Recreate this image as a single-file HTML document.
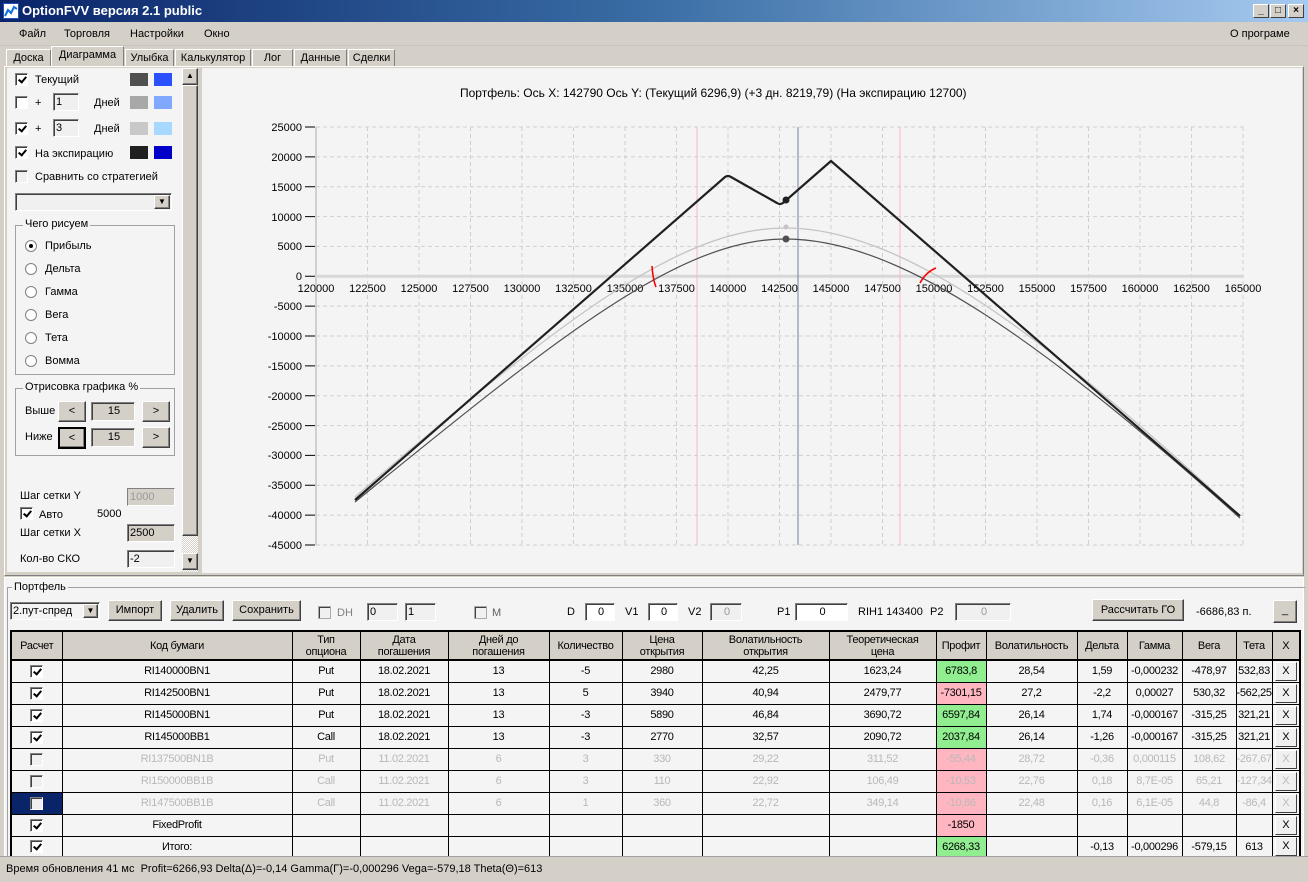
<!DOCTYPE html>
<html><head><meta charset="utf-8">
<style>
*{box-sizing:border-box;margin:0;padding:0}
body{width:1308px;height:882px;overflow:hidden;background:#d4d0c8;font-family:"Liberation Sans",sans-serif;font-size:11px;color:#000;position:relative}
.a{position:absolute}
.title{left:0;top:0;width:1308px;height:22px;background:linear-gradient(90deg,#0a246a,#3a6ea5 50%,#a6caf0);color:#fff;font-weight:bold;font-size:13px;line-height:22px;padding-left:22px}
.wb{width:16px;height:14px;background:#d4d0c8;border:1px solid;border-color:#fff #404040 #404040 #fff;top:4px;font-size:10px;line-height:11px;text-align:center;color:#000;font-weight:bold}
.menu{top:22px;height:24px;line-height:24px;font-size:11px}
.tab{top:49px;height:18px;border:1px solid;border-color:#fff #808080 transparent #fff;line-height:16px;text-align:center;background:#d4d0c8;font-size:11px}
.cb{width:13px;height:13px;border:1px solid;border-color:#808080 #fff #fff #808080;background:#fff;box-shadow:inset 1px 1px 0 #404040}
span.cb{display:inline-block;position:relative;vertical-align:middle}
.c::after{content:"";position:absolute;left:4px;top:1px;width:3px;height:6px;border:solid #000;border-width:0 2px 2px 0;transform:rotate(40deg)}
.tb{border:1px solid;border-color:#808080 #fff #fff #808080;background:#f0f0f0;box-shadow:inset 1px 1px 0 #404040;padding-left:2px;line-height:16px}
.btn{background:#d4d0c8;border:1px solid;border-color:#fff #404040 #404040 #fff;box-shadow:inset -1px -1px 0 #808080;text-align:center}
.rad{width:12px;height:12px;border-radius:50%;background:#fff;border:1px solid #808080}
.grp{border:1px solid #a0a0a0}
.gl{background:#f4f4f4;padding:0 2px}
table{border-collapse:collapse;table-layout:fixed}
td{border:1px solid #000;text-align:center;height:22px;font-size:11px;letter-spacing:-0.3px;white-space:nowrap;overflow:hidden;background:#f4f4f4}
th{border:1px solid #000;border-bottom:2px solid #000;background:#d4d0c8;font-weight:normal;font-size:11px;line-height:12px;height:29px;letter-spacing:-0.3px}
tr.g td{color:#b8b8b8}
.gr{background:#90ee90!important}
.pk{background:#ffb6c1!important}
.x{background:#f0f0f0;border:1px solid;border-color:#fff #404040 #404040 #fff;display:inline-block;width:22px;height:19px;line-height:17px}
</style></head><body>
<div class="a title">OptionFVV версия 2.1 public</div>
<div class="a" style="left:3px;top:3px;width:16px;height:16px;background:#fff;border:1px solid #2050c0"><svg width="14" height="14"><polyline points="1,12 4,6 7,9 10,3 13,5" fill="none" stroke="#1070e0" stroke-width="2"/></svg></div>
<div class="a wb" style="left:1253px">_</div><div class="a wb" style="left:1270px">□</div><div class="a wb" style="left:1288px">×</div>
<div class="a menu" style="left:19px">Файл</div><div class="a menu" style="left:64px">Торговля</div><div class="a menu" style="left:130px">Настройки</div><div class="a menu" style="left:204px">Окно</div><div class="a menu" style="left:1230px">О програме</div>
<div class="a" style="left:0;top:45px;width:1308px;height:1px;background:#c8c4bc"></div>
<div class="a tab" style="left:6px;width:45px">Доска</div>
<div class="a tab" style="left:51px;top:46px;width:73px;height:21px">Диаграмма</div>
<div class="a tab" style="left:125px;width:49px">Улыбка</div>
<div class="a tab" style="left:175px;width:76px">Калькулятор</div>
<div class="a tab" style="left:252px;width:41px">Лог</div>
<div class="a tab" style="left:294px;width:53px">Данные</div>
<div class="a tab" style="left:348px;width:47px">Сделки</div>
<div class="a" style="left:4px;top:66px;width:1300px;height:510px;border:1px solid;border-color:#fff #808080 #808080 #fff;background:#d4d0c8"></div>
<div class="a" style="left:7px;top:68px;width:175px;height:504px;background:#f4f4f4"></div>
<!-- left panel -->
<div class="a cb c" style="left:15px;top:73px"></div><div class="a" style="left:35px;top:74px">Текущий</div>
<div class="a" style="left:130px;top:73px;width:18px;height:13px;background:#505050"></div><div class="a" style="left:154px;top:73px;width:18px;height:13px;background:#2a50ff"></div>
<div class="a cb" style="left:15px;top:96px"></div><div class="a" style="left:35px;top:97px">+</div><div class="a tb" style="left:53px;top:93px;width:26px;height:18px">1</div><div class="a" style="left:94px;top:97px">Дней</div>
<div class="a" style="left:130px;top:96px;width:18px;height:13px;background:#a8a8a8"></div><div class="a" style="left:154px;top:96px;width:18px;height:13px;background:#80a8ff"></div>
<div class="a cb c" style="left:15px;top:122px"></div><div class="a" style="left:35px;top:123px">+</div><div class="a tb" style="left:53px;top:119px;width:26px;height:18px">3</div><div class="a" style="left:94px;top:123px">Дней</div>
<div class="a" style="left:130px;top:122px;width:18px;height:13px;background:#c8c8c8"></div><div class="a" style="left:154px;top:122px;width:18px;height:13px;background:#a8d8ff"></div>
<div class="a cb c" style="left:15px;top:146px"></div><div class="a" style="left:35px;top:148px">На экспирацию</div>
<div class="a" style="left:130px;top:146px;width:18px;height:13px;background:#202020"></div><div class="a" style="left:154px;top:146px;width:18px;height:13px;background:#0000c8"></div>
<div class="a cb" style="left:15px;top:170px;background:#f0f0f0"></div><div class="a" style="left:35px;top:171px">Сравнить со стратегией</div>
<div class="a tb" style="left:15px;top:193px;width:157px;height:18px;background:#f0f0f0"></div><div class="a btn" style="left:154px;top:195px;width:16px;height:14px;font-size:8px;line-height:12px">▼</div>
<div class="a grp" style="left:15px;top:225px;width:160px;height:150px"></div><div class="a gl" style="left:23px;top:218px">Чего рисуем</div>
<div class="a rad" style="left:25px;top:240px"><div style="width:4px;height:4px;background:#000;border-radius:50%;margin:3px"></div></div><div class="a" style="left:45px;top:240px">Прибыль</div>
<div class="a rad" style="left:25px;top:263px"></div><div class="a" style="left:45px;top:263px">Дельта</div>
<div class="a rad" style="left:25px;top:286px"></div><div class="a" style="left:45px;top:286px">Гамма</div>
<div class="a rad" style="left:25px;top:309px"></div><div class="a" style="left:45px;top:309px">Вега</div>
<div class="a rad" style="left:25px;top:332px"></div><div class="a" style="left:45px;top:332px">Тета</div>
<div class="a rad" style="left:25px;top:355px"></div><div class="a" style="left:45px;top:355px">Вомма</div>
<div class="a grp" style="left:15px;top:388px;width:160px;height:68px"></div><div class="a gl" style="left:23px;top:381px">Отрисовка графика %</div>
<div class="a" style="left:25px;top:405px">Выше</div><div class="a btn" style="left:58px;top:401px;width:28px;height:21px;line-height:19px">&lt;</div><div class="a tb" style="left:91px;top:402px;width:44px;height:19px;text-align:center;background:#d4d0c8">15</div><div class="a btn" style="left:142px;top:401px;width:28px;height:21px;line-height:19px">&gt;</div>
<div class="a" style="left:25px;top:431px">Ниже</div><div class="a btn" style="left:58px;top:427px;width:28px;height:22px;line-height:19px;border:2px solid #000">&lt;</div><div class="a tb" style="left:91px;top:428px;width:44px;height:19px;text-align:center;background:#d4d0c8">15</div><div class="a btn" style="left:142px;top:427px;width:28px;height:21px;line-height:19px">&gt;</div>
<div class="a" style="left:20px;top:490px">Шаг сетки Y</div><div class="a tb" style="left:127px;top:488px;width:48px;height:18px;background:#d4d0c8;color:#999;box-shadow:none">1000</div>
<div class="a cb c" style="left:20px;top:507px"></div><div class="a" style="left:39px;top:509px">Авто</div><div class="a" style="left:97px;top:508px">5000</div>
<div class="a" style="left:20px;top:527px">Шаг сетки X</div><div class="a tb" style="left:127px;top:524px;width:48px;height:18px;background:#d4d0c8">2500</div>
<div class="a" style="left:20px;top:553px">Кол-во СКО</div><div class="a tb" style="left:127px;top:550px;width:48px;height:18px">-2</div>
<!-- scrollbar -->
<div class="a" style="left:182px;top:68px;width:16px;height:504px;background:repeating-conic-gradient(#d4d0c8 0 25%,#fff 0 50%) 0 0/2px 2px"></div>
<div class="a btn" style="left:182px;top:68px;width:16px;height:17px;font-size:8px;line-height:14px">▲</div>
<div class="a btn" style="left:182px;top:85px;width:16px;height:451px"></div>
<div class="a btn" style="left:182px;top:553px;width:16px;height:17px;font-size:8px;line-height:14px">▼</div>
<!-- chart -->
<svg class="a" style="left:0;top:0" width="1308" height="576" font-family="Liberation Sans, sans-serif" font-size="11">
<rect x="202" y="68" width="1100" height="505" fill="#f4f4f4"/>
<g stroke="#cfcfcf" stroke-dasharray="4,3" stroke-width="1">
<path d="M367.5 127V545M419 127V545M470.5 127V545M522 127V545M573.5 127V545M625 127V545M676.5 127V545M728 127V545M779.5 127V545M831 127V545M882.5 127V545M934 127V545M985.5 127V545M1037 127V545M1088.5 127V545M1140 127V545M1191.5 127V545M1243 127V545"/>
<path d="M316 127H1243M316 156.9H1243M316 186.7H1243M316 216.6H1243M316 246.4H1243M316 306.1H1243M316 336H1243M316 365.9H1243M316 395.7H1243M316 425.6H1243M316 455.4H1243M316 485.3H1243M316 515.1H1243M316 545H1243"/>
</g>
<path d="M316 127V545" stroke="#d0d0d0" stroke-width="2"/>
<path d="M316 276.3H1243" stroke="#d8d8d8" stroke-width="3"/>
<path d="M697 127V545M900 127V545" stroke="#f4b8c4"/>
<path d="M798 127V545" stroke="#7080a0"/>
<g stroke="#000">
<path d="M305 127H315M305 156.9H315M305 186.7H315M305 216.6H315M305 246.4H315M305 276.3H315M305 306.1H315M305 336H315M305 365.9H315M305 395.7H315M305 425.6H315M305 455.4H315M305 485.3H315M305 515.1H315M305 545H315"/>
</g>
<g text-anchor="end">
<text x="302" y="131">25000</text><text x="302" y="161">20000</text><text x="302" y="191">15000</text><text x="302" y="221">10000</text><text x="302" y="250">5000</text><text x="302" y="280">0</text><text x="302" y="310">-5000</text><text x="302" y="340">-10000</text><text x="302" y="370">-15000</text><text x="302" y="400">-20000</text><text x="302" y="430">-25000</text><text x="302" y="459">-30000</text><text x="302" y="489">-35000</text><text x="302" y="519">-40000</text><text x="302" y="549">-45000</text>
</g>
<g text-anchor="middle">
<text x="316" y="292">120000</text><text x="367.5" y="292">122500</text><text x="419" y="292">125000</text><text x="470.5" y="292">127500</text><text x="522" y="292">130000</text><text x="573.5" y="292">132500</text><text x="625" y="292">135000</text><text x="676.5" y="292">137500</text><text x="728" y="292">140000</text><text x="779.5" y="292">142500</text><text x="831" y="292">145000</text><text x="882.5" y="292">147500</text><text x="934" y="292">150000</text><text x="985.5" y="292">152500</text><text x="1037" y="292">155000</text><text x="1088.5" y="292">157500</text><text x="1140" y="292">160000</text><text x="1191.5" y="292">162500</text><text x="1243" y="292">165000</text>
</g>
<text x="460" y="97" font-size="12">Портфель: Ось X: 142790 Ось Y:  (Текущий 6296,9)  (+3 дн. 8219,79)  (На экспирацию 12700)</text>
<path d="M355 497 C560 320 680 228 785 228 C900 228 1040 330 1240 516" fill="none" stroke="#c4c4c4" stroke-width="1.3"/>
<path d="M355 502 C560 335 680 239 785 239 C900 239 1040 340 1240 518" fill="none" stroke="#505050" stroke-width="1.2"/>
<path d="M355 500 L725 177 Q728 175 731 177 L777 203 Q780 205 783 203 L831 161 L1240 516" fill="none" stroke="#202020" stroke-width="2.2"/>
<circle cx="786" cy="200" r="3.5" fill="#202020"/><circle cx="786" cy="239" r="3.5" fill="#505050"/><circle cx="786" cy="227" r="2.5" fill="#c4c4c4"/>
<path d="M652 266 Q653 280 656 287" stroke="red" stroke-width="1.6" fill="none"/>
<path d="M920 283 Q926 272 936 268" stroke="red" stroke-width="1.6" fill="none"/>
</svg>
<!-- portfolio -->
<div class="a" style="left:4px;top:577px;width:1300px;height:280px;background:#f4f4f4;border:1px solid #fff"></div>
<div class="a grp" style="left:7px;top:587px;width:1298px;height:270px;border-right:none;border-bottom:none"></div>
<div class="a gl" style="left:12px;top:581px">Портфель</div>
<div class="a tb" style="left:10px;top:602px;width:90px;height:18px;background:#f4f4f4">2.пут-спред</div><div class="a btn" style="left:83px;top:604px;width:15px;height:14px;font-size:8px;line-height:12px">▼</div>
<div class="a btn" style="left:108px;top:600px;width:54px;height:21px;line-height:19px">Импорт</div>
<div class="a btn" style="left:170px;top:600px;width:54px;height:21px;line-height:19px">Удалить</div>
<div class="a btn" style="left:232px;top:600px;width:69px;height:21px;line-height:19px">Сохранить</div>
<div class="a cb" style="left:318px;top:606px;background:#f0f0f0;border-color:#aaa"></div><div class="a" style="left:337px;top:607px;color:#808080">DH</div>
<div class="a tb" style="left:367px;top:603px;width:31px;height:18px">0</div><div class="a tb" style="left:405px;top:603px;width:31px;height:18px">1</div>
<div class="a cb" style="left:474px;top:606px;background:#f0f0f0;border-color:#aaa"></div><div class="a" style="left:492px;top:607px;color:#606060">M</div>
<div class="a" style="left:567px;top:606px">D</div><div class="a tb" style="left:585px;top:603px;width:30px;height:18px;text-align:center;background:#fff">0</div>
<div class="a" style="left:625px;top:606px">V1</div><div class="a tb" style="left:648px;top:603px;width:30px;height:18px;text-align:center;background:#fff">0</div>
<div class="a" style="left:688px;top:606px">V2</div><div class="a tb" style="left:710px;top:603px;width:32px;height:18px;text-align:center;color:#999">0</div>
<div class="a" style="left:777px;top:606px">P1</div><div class="a tb" style="left:795px;top:603px;width:53px;height:18px;text-align:center;background:#fff">0</div>
<div class="a" style="left:858px;top:606px">RIH1 143400</div><div class="a" style="left:930px;top:606px">P2</div><div class="a tb" style="left:955px;top:603px;width:56px;height:18px;text-align:center;color:#999">0</div>
<div class="a btn" style="left:1092px;top:599px;width:92px;height:22px;line-height:20px">Рассчитать ГО</div>
<div class="a" style="left:1196px;top:606px">-6686,83 п.</div>
<div class="a btn" style="left:1273px;top:600px;width:24px;height:23px;line-height:18px">_</div>
<table class="a" style="left:10px;top:630px;width:1289px;border:2px solid #000">
<colgroup><col style="width:51px"><col style="width:230px"><col style="width:68px"><col style="width:88px"><col style="width:101px"><col style="width:73px"><col style="width:80px"><col style="width:127px"><col style="width:107px"><col style="width:50px"><col style="width:91px"><col style="width:50px"><col style="width:55px"><col style="width:54px"><col style="width:36px"><col style="width:28px"></colgroup>
<tr><th>Расчет</th><th>Код бумаги</th><th>Тип<br>опциона</th><th>Дата<br>погашения</th><th>Дней до<br>погашения</th><th>Количество</th><th>Цена<br>открытия</th><th>Волатильность<br>открытия</th><th>Теоретическая<br>цена</th><th>Профит</th><th>Волатильность</th><th>Дельта</th><th>Гамма</th><th>Вега</th><th>Тета</th><th>X</th></tr>
<tr><td><span class="cb c"></span></td><td>RI140000BN1</td><td>Put</td><td>18.02.2021</td><td>13</td><td>-5</td><td>2980</td><td>42,25</td><td>1623,24</td><td class="gr">6783,8</td><td>28,54</td><td>1,59</td><td>-0,000232</td><td>-478,97</td><td>532,83</td><td><span class="x">X</span></td></tr>
<tr><td><span class="cb c"></span></td><td>RI142500BN1</td><td>Put</td><td>18.02.2021</td><td>13</td><td>5</td><td>3940</td><td>40,94</td><td>2479,77</td><td class="pk">-7301,15</td><td>27,2</td><td>-2,2</td><td>0,00027</td><td>530,32</td><td>-562,25</td><td><span class="x">X</span></td></tr>
<tr><td><span class="cb c"></span></td><td>RI145000BN1</td><td>Put</td><td>18.02.2021</td><td>13</td><td>-3</td><td>5890</td><td>46,84</td><td>3690,72</td><td class="gr">6597,84</td><td>26,14</td><td>1,74</td><td>-0,000167</td><td>-315,25</td><td>321,21</td><td><span class="x">X</span></td></tr>
<tr><td><span class="cb c"></span></td><td>RI145000BB1</td><td>Call</td><td>18.02.2021</td><td>13</td><td>-3</td><td>2770</td><td>32,57</td><td>2090,72</td><td class="gr">2037,84</td><td>26,14</td><td>-1,26</td><td>-0,000167</td><td>-315,25</td><td>321,21</td><td><span class="x">X</span></td></tr>
<tr class="g"><td><span class="cb" style="background:#f0f0f0"></span></td><td>RI137500BN1B</td><td>Put</td><td>11.02.2021</td><td>6</td><td>3</td><td>330</td><td>29,22</td><td>311,52</td><td class="pk">-55,44</td><td>28,72</td><td>-0,36</td><td>0,000115</td><td>108,62</td><td>-267,67</td><td><span class="x" style="color:#bbb">X</span></td></tr>
<tr class="g"><td><span class="cb" style="background:#f0f0f0"></span></td><td>RI150000BB1B</td><td>Call</td><td>11.02.2021</td><td>6</td><td>3</td><td>110</td><td>22,92</td><td>106,49</td><td class="pk">-10,53</td><td>22,76</td><td>0,18</td><td>8,7E-05</td><td>65,21</td><td>-127,34</td><td><span class="x" style="color:#bbb">X</span></td></tr>
<tr class="g"><td style="background:#0a246a"><span class="cb" style="background:#f0f0f0"></span></td><td>RI147500BB1B</td><td>Call</td><td>11.02.2021</td><td>6</td><td>1</td><td>360</td><td>22,72</td><td>349,14</td><td class="pk">-10,86</td><td>22,48</td><td>0,16</td><td>6,1E-05</td><td>44,8</td><td>-86,4</td><td><span class="x" style="color:#bbb">X</span></td></tr>
<tr><td><span class="cb c"></span></td><td>FixedProfit</td><td></td><td></td><td></td><td></td><td></td><td></td><td></td><td class="pk">-1850</td><td></td><td></td><td></td><td></td><td></td><td><span class="x">X</span></td></tr>
<tr><td><span class="cb c"></span></td><td>Итого:</td><td></td><td></td><td></td><td></td><td></td><td></td><td></td><td class="gr">6268,33</td><td></td><td>-0,13</td><td>-0,000296</td><td>-579,15</td><td>613</td><td><span class="x">X</span></td></tr>
</table>
<div class="a" style="left:0;top:856px;width:1308px;height:26px;background:#d4d0c8;border-top:1px solid #a0a0a0;padding-left:6px;line-height:24px">Время обновления 41 мс&nbsp; Profit=6266,93 Delta(Δ)=-0,14 Gamma(Γ)=-0,000296 Vega=-579,18 Theta(Θ)=613</div>
</body></html>
